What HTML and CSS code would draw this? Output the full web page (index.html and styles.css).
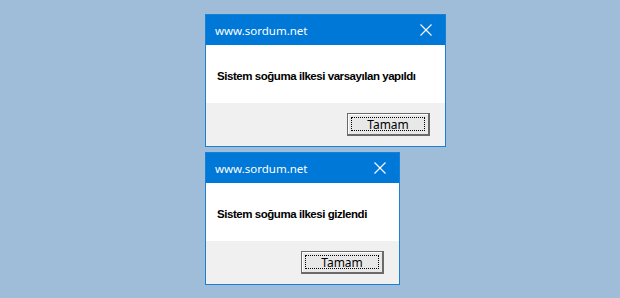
FILE: index.html
```html
<!DOCTYPE html>
<html lang="tr">
<head>
<meta charset="utf-8">
<link rel="stylesheet" href="styles.css">
</head>
<body>
<div class="stack">
  <div class="dialog dialog-wide">
    <div class="titlebar">
      <span class="title">www.sordum.net</span>
      <span class="close"><svg width="12" height="12" viewBox="0 0 12 12"><path d="M0.5 0.5 L11.5 11.5 M11.5 0.5 L0.5 11.5" stroke="#fff" stroke-width="1.1" fill="none"/></svg></span>
    </div>
    <div class="content">Sistem soğuma ilkesi varsayılan yapıldı</div>
    <div class="footer"><button class="btn"><span class="focus">Tamam</span></button></div>
  </div>
  <div class="dialog dialog-narrow">
    <div class="titlebar">
      <span class="title">www.sordum.net</span>
      <span class="close"><svg width="12" height="12" viewBox="0 0 12 12"><path d="M0.5 0.5 L11.5 11.5 M11.5 0.5 L0.5 11.5" stroke="#fff" stroke-width="1.1" fill="none"/></svg></span>
    </div>
    <div class="content">Sistem soğuma ilkesi gizlendi</div>
    <div class="footer"><button class="btn"><span class="focus">Tamam</span></button></div>
  </div>
</div>
</body>
</html>
```
FILE: styles.css
```css
html, body {
  margin: 0;
  padding: 0;
  background: #9fbdd8;
  height: 100%;
}
.stack {
  display: flex;
  flex-direction: column;
  align-items: flex-start;
  gap: 5px;
  padding: 14px 0 0 205px;
}
.dialog {
  border: 1px solid #1a80d6;
  background: #fff;
  box-sizing: border-box;
  font-family: "Noto Sans", "DejaVu Sans", sans-serif;
}
.dialog-wide { width: 241px; }
.dialog-narrow { width: 195px; }
.titlebar {
  height: 30px;
  background: #0078d7;
  display: flex;
  align-items: center;
  justify-content: space-between;
  padding: 0 13px 0 9px;
}
.title {
  color: #fff;
  font-size: 11.5px;
  font-family: "Noto Sans", sans-serif;
}
.close {
  display: flex;
  width: 12px;
  height: 12px;
}
.content {
  height: 58px;
  display: flex;
  align-items: center;
  padding: 3px 0 0 11px;
  box-sizing: border-box;
  font-family: "Liberation Sans", Arial, sans-serif;
  font-weight: bold;
  font-size: 11.5px;
  letter-spacing: -0.45px;
  color: #000;
}
.footer {
  height: 43px;
  background: #f0f0f0;
  display: flex;
  justify-content: flex-end;
  align-items: flex-start;
  padding: 10px 15px 0 0;
  box-sizing: border-box;
}
.btn {
  width: 83px;
  height: 23px;
  margin: 0;
  padding: 3px;
  box-sizing: border-box;
  border: 1px solid #6a6a6a;
  border-right-width: 2px;
  border-bottom-width: 2px;
  background: #e8e8e8;
  box-shadow: inset 1px 1px 0 #fff;
  display: flex;
}
.focus {
  flex: 1;
  border: 1px dotted #000;
  display: flex;
  align-items: center;
  justify-content: center;
  font-family: "Noto Sans", sans-serif;
  font-size: 12px;
  color: #000;
  line-height: 1;
  padding-top: 1px;
}
```
